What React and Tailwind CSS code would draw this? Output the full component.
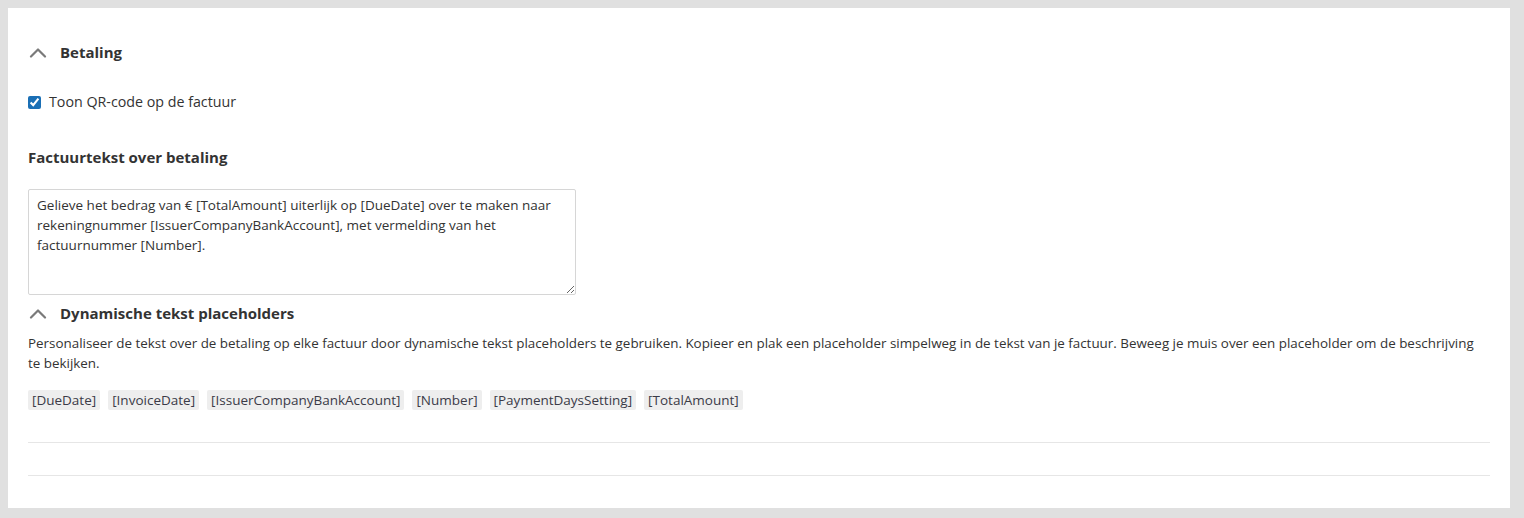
import React from "react";

const font = { fontFamily: '"Open Sans", "Liberation Sans", sans-serif' };

const Chevron = () => (
  <svg width="18" height="11" viewBox="0 0 18 11" className="shrink-0">
    <polyline points="2,9.5 9,2.5 16,9.5" fill="none" stroke="#7a7a7a" strokeWidth="2.2" strokeLinecap="round" strokeLinejoin="round" />
  </svg>
);

const placeholders = ["[DueDate]", "[InvoiceDate]", "[IssuerCompanyBankAccount]", "[Number]", "[PaymentDaysSetting]", "[TotalAmount]"];

export default function App() {
  return (
    <div className="h-[518px] bg-[#e0e0e0] py-2 pl-2 pr-[14px] text-[#333]" style={font}>
      <div className="h-[500px] bg-white px-5 pt-8">
        {/* Betaling */}
        <div className="flex h-6 items-center gap-[13px] pl-[1px]">
          <Chevron />
          <h2 className="text-[15px] font-bold leading-6 text-[#333]">Betaling</h2>
        </div>

        <label className="mt-7 flex h-5 items-center gap-2 text-[14.25px] leading-5">
          <input type="checkbox" defaultChecked className="m-0 h-[13px] w-[13px] accent-[#1a6fb5]" />
          <span>Toon QR-code op de factuur</span>
        </label>

        <h3 className="mt-[33px] text-[15px] font-bold leading-6">Factuurtekst over betaling</h3>

        <textarea
          className="mt-5 block h-[106px] w-[548px] rounded-[2px] border border-[#d6d6d6] px-2 py-[5px] text-[13.5px] leading-5 text-[#333] outline-none"
          style={font}
          defaultValue="Gelieve het bedrag van € [TotalAmount] uiterlijk op [DueDate] over te maken naar rekeningnummer [IssuerCompanyBankAccount], met vermelding van het factuurnummer [Number]."
        />

        {/* Dynamische tekst placeholders */}
        <div className="mt-[6px] flex h-6 items-center gap-[13px] pl-[1px]">
          <Chevron />
          <h3 className="text-[15px] font-bold leading-6">Dynamische tekst placeholders</h3>
        </div>
        <p className="mt-2 pr-2 text-[13.4px] leading-5">
          Personaliseer de tekst over de betaling op elke factuur door dynamische tekst placeholders te gebruiken. Kopieer en plak een placeholder simpelweg in de tekst van je factuur. Beweeg je muis over een placeholder om de beschrijving te bekijken.
        </p>
        <div className="mt-[17px] flex gap-2">
          {placeholders.map((p) => (
            <span key={p} className="h-5 rounded-[2px] bg-[#eeeeee] px-1 text-[13.5px] leading-5 text-[#3b3b48]">
              {p}
            </span>
          ))}
        </div>

        <div className="mt-8 border-t border-[#e6e6e6]" />
        <div className="mt-8 border-t border-[#e6e6e6]" />
      </div>
    </div>
  );
}
